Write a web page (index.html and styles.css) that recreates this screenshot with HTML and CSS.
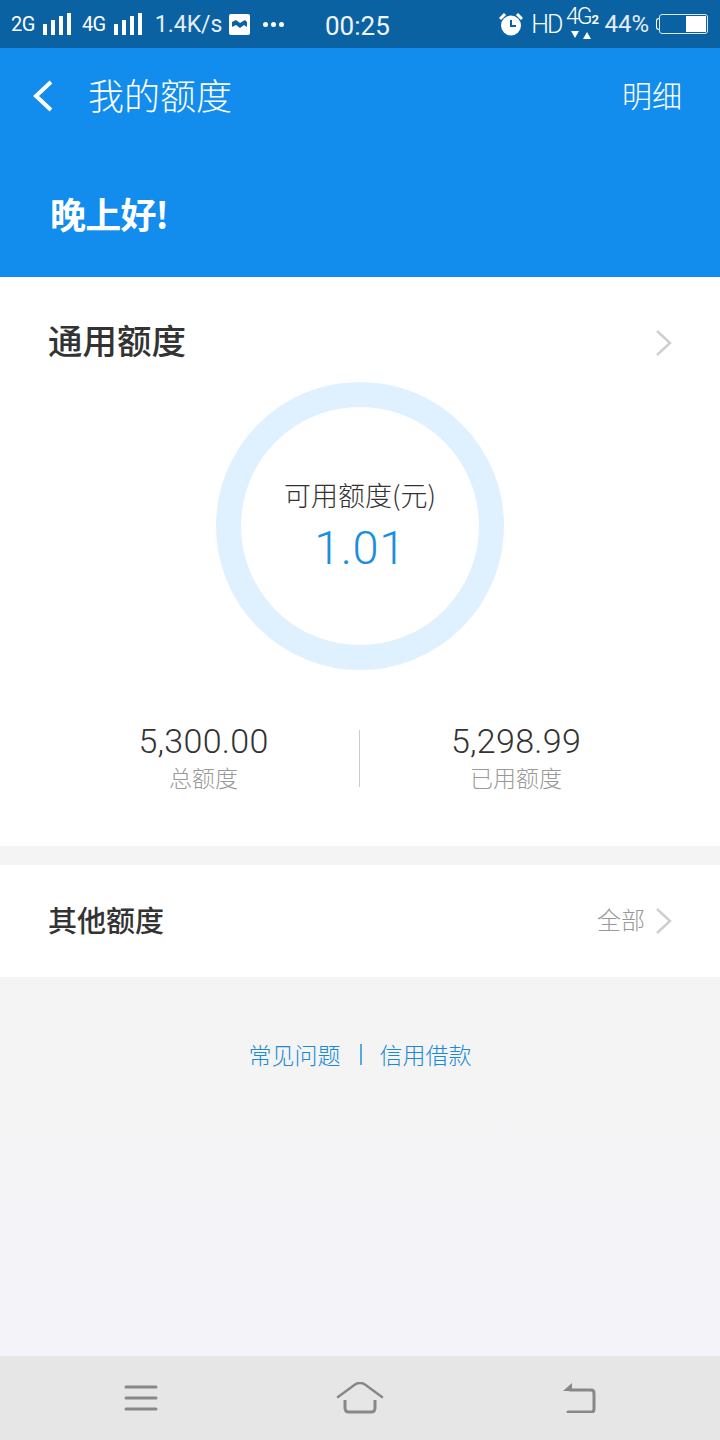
FILE: index.html
```html
<!DOCTYPE html>
<html lang="zh-CN">
<head>
<meta charset="UTF-8">
<meta name="viewport" content="width=device-width, initial-scale=1.0">
<title>我的额度</title>
<link rel="stylesheet" href="styles.css">
</head>
<body>
<div class="status-bar">
  <div class="status-left">
    <span class="net">2G</span>
    <svg class="bars" width="28" height="22" viewBox="0 0 28 22"><path d="M0 11h4v11H0zM8 7h4v15H8zM16 3h4v19h-4zM24 0h4v22h-4z" fill="#fff"/></svg>
    <span class="net net-two">4G</span>
    <svg class="bars" width="28" height="22" viewBox="0 0 28 22"><path d="M0 11h4v11H0zM8 7h4v15H8zM16 3h4v19h-4zM24 0h4v22h-4z" fill="#fff"/></svg>
    <span class="speed">1.4K/s</span>
    <svg class="pic" width="21" height="21" viewBox="0 0 21 21"><rect width="21" height="21" rx="2" fill="#fff"/><path d="M3 8l4-2 4 3 5-3 2 2v5l-3-2-4 3-4-3-4 2z" fill="#0b62a3"/></svg>
    <span class="dots"><i></i><i></i><i></i></span>
  </div>
  <div class="clock">00:25</div>
  <div class="status-right">
    <svg class="alarm" width="24" height="23" viewBox="0 0 24 23"><circle cx="12" cy="12.500" r="10" fill="#fff"/><path d="M1 6l5-5M18 1l5 5" stroke="#fff" stroke-width="3" fill="none"/><path d="M12 7v6h5" stroke="#0b62a3" stroke-width="2" fill="none"/></svg>
    <span class="hd">HD</span>
    <span class="sim">
      <span class="sim-text">4G<small>2</small></span>
      <svg width="24" height="8" viewBox="0 0 24 8"><path d="M1 0h8L5 7zM13 8h8l-4-7z" fill="#fff"/></svg>
    </span>
    <span class="pct">44%</span>
    <span class="battery-cap"></span>
    <span class="battery"><span class="battery-fill"></span></span>
  </div>
</div>

<header class="top">
  <div class="top-row">
    <svg class="back" width="24" height="34" viewBox="0 0 24 34"><path d="M21 3L6 17l15 14" stroke="#fff" stroke-width="4" fill="none"/></svg>
    <h1>我的额度</h1>
    <span class="detail">明细</span>
  </div>
  <div class="greet">晚上好!</div>
</header>

<section class="card">
  <div class="card-head">
    <h2>通用额度</h2>
    <svg class="chev" width="18" height="28" viewBox="0 0 18 28"><path d="M2 2l13 12L2 26" stroke="#cfcfcf" stroke-width="2.500" fill="none"/></svg>
  </div>
  <div class="ring">
    <div class="ring-label">可用额度(元)</div>
    <div class="ring-num">1.01</div>
  </div>
  <div class="totals">
    <div class="total">
      <div class="total-num">5,300.00</div>
      <div class="total-label">总额度</div>
    </div>
    <div class="total">
      <div class="total-num">5,298.99</div>
      <div class="total-label">已用额度</div>
    </div>
  </div>
</section>

<section class="other">
  <h3>其他额度</h3>
  <div class="other-right">
    <span>全部</span>
    <svg class="chev" width="18" height="28" viewBox="0 0 18 28"><path d="M2 2l13 12L2 26" stroke="#cfcfcf" stroke-width="2.500" fill="none"/></svg>
  </div>
</section>

<main class="rest">
  <div class="links">
    <a>常见问题</a>
    <a>信用借款</a>
  </div>
</main>

<nav class="navbar">
  <svg width="34" height="28" viewBox="0 0 34 28"><path d="M2 3h30M2 14h30M2 25h30" stroke="#888" stroke-width="3" stroke-linecap="round" fill="none"/></svg>
  <svg width="48" height="32" viewBox="0 0 48 32"><path d="M2 15L19 2.500q5-3 10 0L46 15" stroke="#888" stroke-width="2.500" stroke-linecap="round" fill="none"/><path d="M9 18v8q0 4 4 4h22q4 0 4-4v-8" stroke="#888" stroke-width="3" fill="none"/></svg>
  <svg width="36" height="30" viewBox="0 0 36 30"><path d="M10 0v8H1z" fill="#888"/><path d="M8 7h21q3 0 3 3v16q0 3-3 3H6" stroke="#888" stroke-width="3" stroke-linecap="round" fill="none"/></svg>
</nav>
</body>
</html>
```

FILE: styles.css
```css
* {
  box-sizing: border-box;
}
body {
  margin: 0;
  width: 720px;
  height: 1440px;
  display: flex;
  flex-direction: column;
  font-family: "Noto Sans CJK SC", "Roboto", sans-serif;
  background-color: #f4f4f4;
  overflow: hidden;
}
h1, h2, h3 {
  margin: 0;
}

/* status bar */
.status-bar {
  height: 48px;
  background-color: #0b62a3;
  color: #fff;
  display: flex;
  align-items: center;
  justify-content: space-between;
  padding: 0 12px 0 11px;
  font-family: "Roboto", sans-serif;
  position: relative;
}
.status-left, .status-right {
  display: flex;
  align-items: center;
}
.net {
  font-size: 20px;
  letter-spacing: -0.5px;
}
.bars {
  margin-left: 8px;
}
.net-two {
  margin-left: 11px;
}
.speed {
  font-size: 23px;
  margin-left: 13px;
  color: #e4eef6;
}
.pic {
  margin-left: 7px;
}
.dots {
  display: flex;
  gap: 3px;
  margin-left: 13px;
}
.dots i {
  width: 5px;
  height: 5px;
  border-radius: 50%;
  background-color: #fff;
}
.clock {
  position: absolute;
  left: 325px;
  top: 10px;
  font-size: 26px;
  line-height: 32px;
  color: #f0f5fa;
}
.alarm {
  margin-right: 8px;
}
.hd {
  font-size: 25px;
  letter-spacing: -2px;
  font-weight: 300;
}
.sim {
  display: flex;
  flex-direction: column;
  align-items: center;
  margin-left: 4px;
  width: 34px;
  margin-top: -4px;
}
.sim-text {
  font-size: 23px;
  line-height: 24px;
  letter-spacing: -2px;
  font-weight: 300;
}
.sim-text small {
  font-size: 13px;
  font-weight: 700;
  letter-spacing: 0;
  margin-left: 1px;
}
.sim svg {
  margin-top: -1px;
}
.pct {
  font-size: 24px;
  margin-left: 5px;
  color: #e4eef6;
}
.battery-cap {
  width: 3px;
  height: 12px;
  margin-left: 7px;
  border: 1px solid #fff;
  border-right: none;
  border-radius: 3px 0 0 3px;
}
.battery {
  width: 49px;
  height: 20px;
  border: 1px solid #dbe7f1;
  border-radius: 3px;
  padding: 1px;
  display: flex;
  justify-content: flex-end;
}
.battery-fill {
  width: 20px;
  background-color: #fff;
}

/* blue header */
.top {
  height: 229px;
  background-color: #128ded;
  color: #fff;
}
.top-row {
  height: 96px;
  display: flex;
  align-items: center;
  padding: 0 38px 0 30px;
}
.top-row h1 {
  font-size: 36px;
  line-height: 44px;
  font-weight: 300;
  margin: -5px 0 0 34px;
  flex: 1;
}
.detail {
  font-size: 30px;
  line-height: 44px;
  margin-top: -5px;
  font-weight: 300;
}
.greet {
  margin: 44px 0 0 50px;
  font-size: 36px;
  line-height: 50px;
  font-weight: 700;
  letter-spacing: -0.8px;
}

/* main card */
.card {
  height: 569px;
  background-color: #fff;
}
.card-head {
  display: flex;
  align-items: center;
  justify-content: space-between;
  height: 50px;
  margin-top: 41px;
  padding: 0 47px 0 48px;
}
.card-head h2 {
  font-size: 34.500px;
  line-height: 44px;
  margin-top: -8px;
  font-weight: 500;
  color: #333;
}
.ring {
  width: 288px;
  height: 288px;
  margin: 14px auto 0;
  border: 25px solid #dff1fe;
  border-radius: 50%;
  display: flex;
  flex-direction: column;
  align-items: center;
  justify-content: center;
  padding-top: 3px;
}
.ring-label {
  font-size: 27px;
  line-height: 36px;
  color: #333;
  font-weight: 300;
}
.ring-num {
  font-family: "Roboto", sans-serif;
  font-size: 47px;
  line-height: 62px;
  letter-spacing: 0.5px;
  margin-top: 4px;
  color: #1a8ee0;
  font-weight: 300;
}
.totals {
  display: grid;
  grid-template-columns: 1fr 1fr;
  margin: 60px 48px 0;
}
.total {
  height: 57px;
  text-align: center;
}
.total:first-child {
  border-right: 1px solid #ccc;
}
.total-num {
  font-family: "Roboto", sans-serif;
  font-size: 34px;
  line-height: 36px;
  letter-spacing: 0.3px;
  font-weight: 300;
  color: #333;
  margin-top: -7px;
}
.total-label {
  font-size: 23px;
  line-height: 32px;
  margin-top: 2px;
  font-weight: 300;
  color: #999;
}

/* other row */
.other {
  height: 112px;
  margin-top: 19px;
  background-color: #fff;
  display: flex;
  align-items: center;
  justify-content: space-between;
  padding: 0 47px 0 48px;
}
.other h3 {
  font-size: 29px;
  line-height: 44px;
  margin-top: -5px;
  font-weight: 500;
  color: #333;
}
.other-right {
  display: flex;
  align-items: center;
  gap: 10px;
  font-size: 24px;
  font-weight: 300;
  color: #999;
}
.other-right span {
  line-height: 32px;
  margin-top: -5px;
}

/* lower area */
.rest {
  flex: 1;
  background: linear-gradient(#f4f4f4 25%, #f3f3f9 85%);
}
.links {
  display: flex;
  justify-content: center;
  margin-top: 61px;
  font-size: 23px;
  line-height: 32px;
  font-weight: 300;
  color: #1a8ad4;
}
.links a {
  padding: 0 20px;
}
.links a:first-child {
  position: relative;
}
.links a:last-child {
  margin-left: -1px;
}
.links a:first-child::after {
  content: "";
  position: absolute;
  right: -1px;
  top: 6px;
  width: 2px;
  height: 21px;
  background-color: #59a9df;
}

/* bottom nav */
.navbar {
  height: 84px;
  background-color: #e6e6e6;
  display: grid;
  grid-template-columns: 281px 158px 281px;
  align-items: center;
  justify-items: center;
}
```
